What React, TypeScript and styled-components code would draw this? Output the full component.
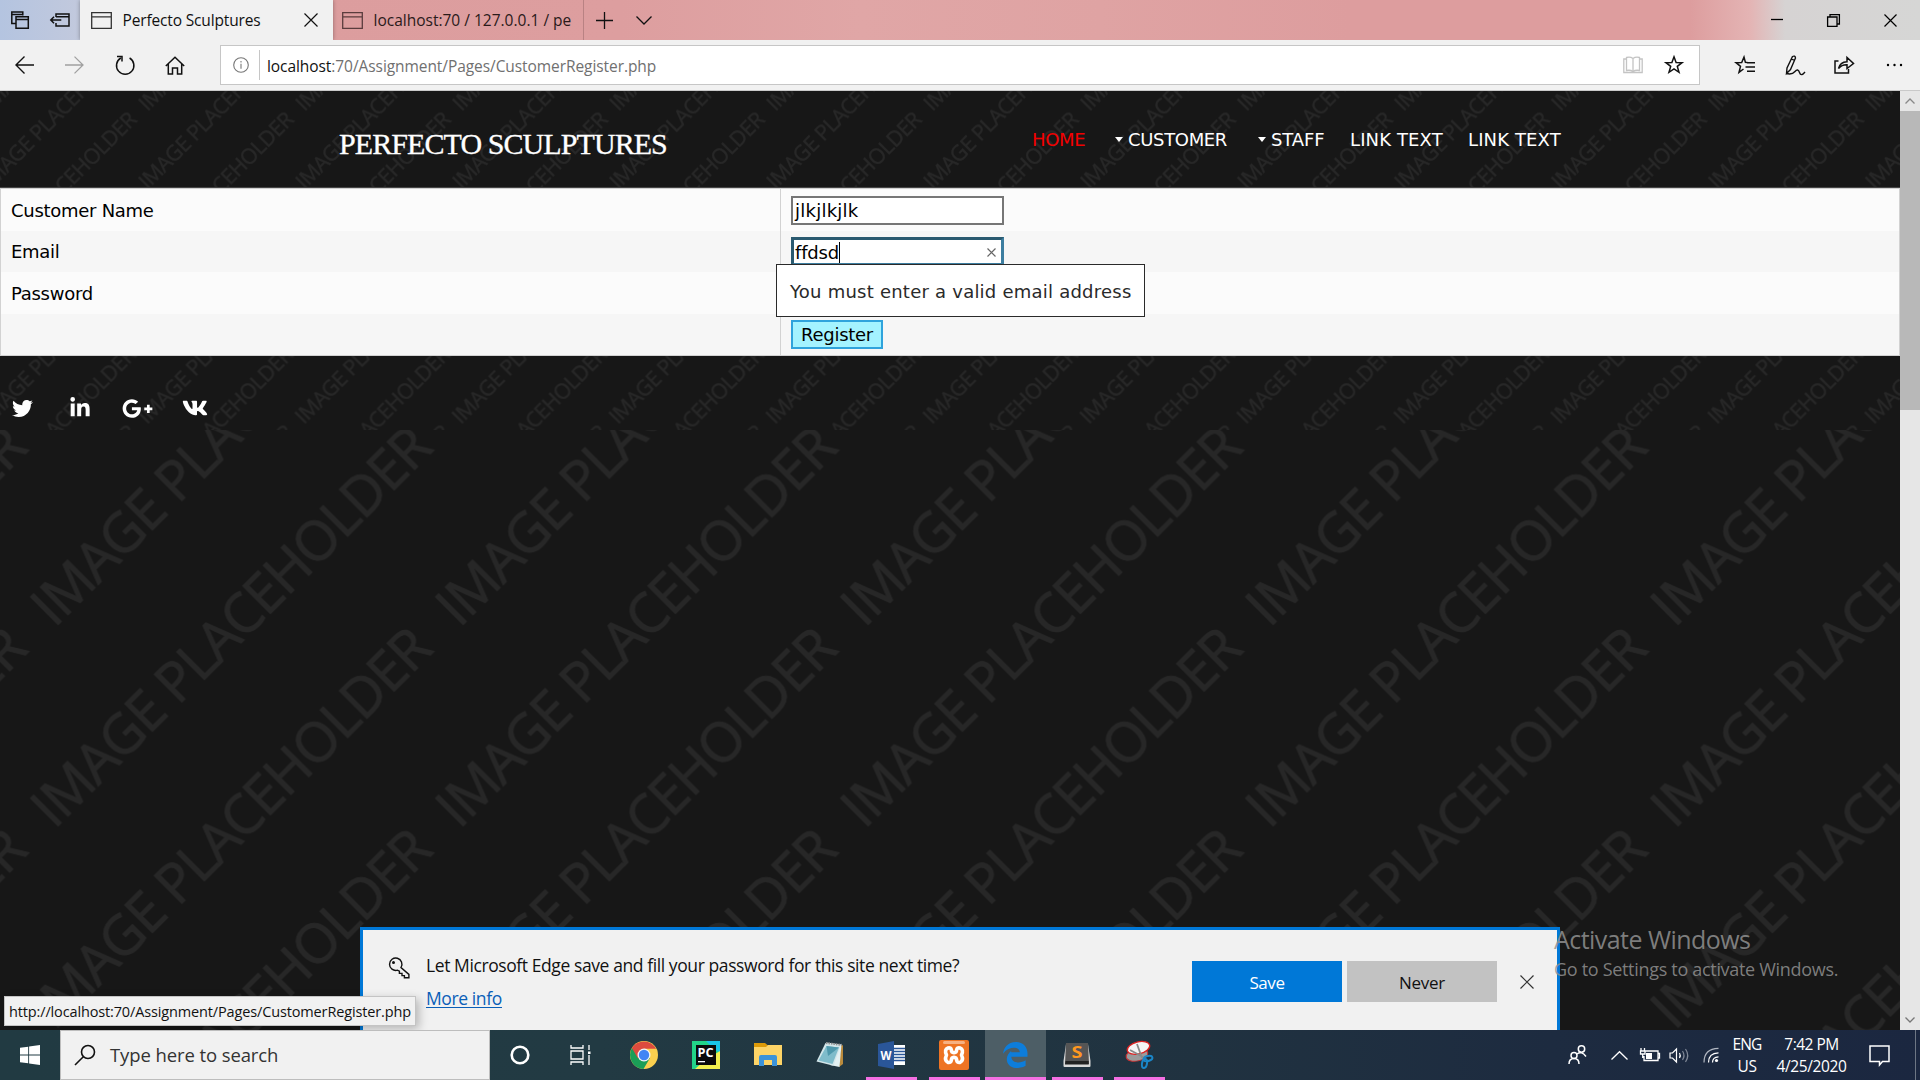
import React from "react";
import styled, { createGlobalStyle } from "styled-components";
import { FaTwitter, FaLinkedinIn, FaGooglePlusG, FaVk } from "react-icons/fa";

const UI = `"Open Sans", "Noto Sans", sans-serif`;
const PAGE = `"DejaVu Sans", sans-serif`;

const Global = createGlobalStyle`
  * { box-sizing: border-box; }
  body { margin: 0; background: #171717; overflow: hidden; }
  svg { display: block; flex: none; overflow: visible; }
`;

const Screen = styled.div`
  width: 1920px;
  height: 1080px;
  display: grid;
  grid-template-rows: 40px 51px 939px 50px;
  font-family: ${UI};
  color: #111;
  overflow: hidden;
`;

/* ---------- shared text ---------- */
const Label = styled.span<{ $size: number; $ls?: number; $color?: string }>`
  font-size: ${(p) => p.$size}px;
  letter-spacing: ${(p) => p.$ls ?? 0}px;
  color: ${(p) => p.$color ?? "inherit"};
  line-height: 1;
  white-space: nowrap;
`;

/* ---------- tab strip ---------- */
const TabStrip = styled.div`
  display: flex;
  background: linear-gradient(90deg, #b4c4e0 0, #c2c9dd 80px, #dc9d9e 300px, #dd9e9f 620px,
    #e0a6a6 860px, #dfa3a3 1100px, #dd9d9e 1350px, #dd9d9e 1690px, #e4b4b4 1750px, #d6d3d3 1785px, #d6d6d5 1920px);
`;
const TabTools = styled.div`
  width: 80px;
  display: flex;
  align-items: center;
  padding-left: 10px;
  gap: 20px;
`;
const Tab = styled.div<{ $active?: boolean }>`
  width: ${(p) => (p.$active ? 253 : 251)}px;
  display: flex;
  align-items: center;
  padding: 0 ${(p) => (p.$active ? 15 : 4)}px 0 ${(p) => (p.$active ? 11 : 9)}px;
  background: ${(p) => (p.$active ? "#f1f1f1" : "transparent")};
  border-right: ${(p) => (p.$active ? "none" : "1px solid #b98283")};
  box-shadow: ${(p) => (p.$active ? "0 0 4px rgba(0,0,0,.35)" : "none")};
`;
const TabTitle = styled(Label)`
  margin-left: 10.5px;
  flex: 1;
  height: 22px;
  line-height: 22px;
`;
const StripButtons = styled.div`
  display: flex;
  align-items: center;
  padding-left: 12px;
  gap: 23px;
`;
const WindowButtons = styled.div`
  margin-left: auto;
  display: flex;
  align-items: center;
  padding-right: 23px;
  gap: 44px;
`;

/* ---------- toolbar ---------- */
const Toolbar = styled.div`
  display: flex;
  align-items: center;
  background: #f1f1f1;
  border-bottom: 1px solid #c9c9c9;
`;
const NavButtons = styled.div`
  width: 220px;
  display: flex;
  align-items: center;
  padding-left: 15px;
  gap: 31px;
`;
const AddressBox = styled.div`
  width: 1480px;
  height: 40px;
  display: flex;
  align-items: center;
  background: #fff;
  border: 1px solid #c6c6c6;
  padding: 0 15px 0 12px;
`;
const AddressDivider = styled.div`
  width: 1px;
  height: 30px;
  background: #c6c6c6;
  margin: 0 7px 0 10px;
`;
const Url = styled(Label)`
  flex: 1;
  padding-top: 3px;
  b { font-weight: 400; color: #111; }
`;
const AddressIcons = styled.div`
  display: flex;
  align-items: center;
  gap: 21px;
`;
const ToolIcons = styled.div`
  display: flex;
  align-items: center;
  padding-left: 35px;
  gap: 29px;
`;

/* ---------- viewport ---------- */
const Viewport = styled.div`
  position: relative;
  display: flex;
  overflow: hidden;
`;
const Page = styled.div`
  width: 1900px;
  display: grid;
  grid-template-rows: 97px 168px 74px 600px;
  font-family: ${PAGE};
`;
const Band = styled.div`
  position: relative;
  background: #171717;
  overflow: hidden;
  display: flex;
`;
const PatternSvg = styled.svg`
  position: absolute;
  inset: 0;
  width: 100%;
  height: 100%;
`;
const Header = styled.div`
  position: relative;
  width: 100%;
  display: flex;
  justify-content: space-between;
  padding: 0 338px 0 339px;
  border-bottom: 1px solid #454545;
`;
const SiteName = styled.div`
  font-family: "Liberation Serif", serif;
  font-size: 30px;
  line-height: 34px;
  margin-top: 36px;
  letter-spacing: -0.92px;
  color: #fff;
  -webkit-text-stroke: 0.3px #fff;
  white-space: nowrap;
`;
const Menu = styled.div`
  display: flex;
  margin-top: 36px;
`;
const MenuItem = styled.div<{ $red?: boolean; $w: number; $ls?: number }>`
  width: ${(p) => p.$w}px;
  height: 24px;
  display: flex;
  align-items: center;
  gap: 5px;
  font-size: 18px;
  letter-spacing: ${(p) => p.$ls ?? -0.34}px;
  white-space: nowrap;
  color: ${(p) => (p.$red ? "#f20000" : "#fff")};
`;

const Table = styled.div`
  display: grid;
  grid-template-rows: 42px 41px 42px 41px;
  border: 1px solid #d2d2d2;
  position: relative;
`;
const Row = styled.div<{ $alt?: boolean }>`
  display: grid;
  grid-template-columns: 780px 1fr;
  background: ${(p) => (p.$alt ? "#f6f6f6" : "#fbfbfb")};
`;
const Cell = styled.div<{ $field?: boolean }>`
  display: flex;
  align-items: center;
  font-size: 18px;
  letter-spacing: -0.28px;
  color: #000;
  padding-left: 10px;
  border-right: ${(p) => (p.$field ? "none" : "1px solid #d2d2d2")};
`;
const Input = styled.div<{ $focus?: boolean }>`
  width: 213px;
  height: 29px;
  display: flex;
  align-items: center;
  background: #fff;
  border: 2px solid #767676;
  padding: 0 7px 0 2px;
  letter-spacing: 0.25px;
  ${(p) => p.$focus && "border-width: 3px; border-color: #2a5a70 #3d7ea0 #3d7ea0 #2a5a70; padding: 1px 5px 0 1px; letter-spacing: -0.2px;"}
`;
const Caret = styled.i`
  width: 1px;
  height: 21px;
  background: #000;
`;
const ClearIcon = styled.span`
  margin-left: auto;
  display: flex;
`;
const Register = styled.div`
  width: 92px;
  height: 29px;
  display: flex;
  align-items: center;
  justify-content: center;
  background: #a4f3ff;
  border: 2px solid #2fa3dc;
`;
const Tip = styled.div`
  position: absolute;
  left: 775px;
  top: 75px;
  width: 369px;
  height: 53px;
  display: flex;
  align-items: center;
  padding: 2px 0 0 13px;
  background: #fff;
  border: 1px solid #2a2a2a;
  font-size: 18px;
  letter-spacing: 0.23px;
  color: #2a2a2a;
  white-space: nowrap;
  z-index: 2;
`;
const Social = styled.div`
  position: relative;
  display: flex;
  align-items: center;
  color: #fff;
  padding: 30px 0 0 12px;
  height: 74px;
`;
const SocialItem = styled.div<{ $w: number }>`
  width: ${(p) => p.$w}px;
`;

const Scrollbar = styled.div`
  width: 20px;
  display: flex;
  flex-direction: column;
  background: #e6e6e6;
`;
const ScrollEnd = styled.div`
  height: 20px;
  display: flex;
  align-items: center;
  justify-content: center;
`;
const Thumb = styled.div`
  height: 299px;
  margin-bottom: 600px;
  background: #b8b8b8;
`;

/* ---------- floating bars ---------- */
const SaveBar = styled.div`
  position: absolute;
  left: 360px;
  top: 836px;
  width: 1200px;
  height: 103px;
  background: #f1f1f1;
  border: 3px solid #0078d7;
  border-bottom: none;
  display: flex;
  padding: 0 23px 0 25px;
`;
const KeyBox = styled.div`
  padding-top: 27px;
  width: 38px;
`;
const SaveText = styled.div`
  flex: 1;
  display: flex;
  flex-direction: column;
  align-items: flex-start;
  padding-top: 27px;
  gap: 15px;
`;
const LinkLabel = styled(Label)`
  color: #0a5fb8;
  border-bottom: 1px solid #0a5fb8;
`;
const SaveActions = styled.div`
  display: flex;
  align-items: center;
  padding-top: 3px;
`;
const ActionButton = styled.div<{ $primary?: boolean }>`
  width: 150px;
  height: 41px;
  padding-top: 2px;
  margin-right: ${(p) => (p.$primary ? 5 : 23)}px;
  display: flex;
  align-items: center;
  justify-content: center;
  background: ${(p) => (p.$primary ? "#0078d7" : "#c2c2c2")};
  color: ${(p) => (p.$primary ? "#fff" : "#111")};
`;
const Status = styled.div`
  position: absolute;
  left: 4px;
  top: 905px;
  width: 412px;
  height: 30px;
  display: flex;
  align-items: center;
  padding: 2px 0 0 4px;
  background: #f1f1f1;
  border: 1px solid #c4c4c4;
  box-shadow: 3px 3px 10px rgba(0, 0, 0, 0.25);
`;
const Watermark = styled.div`
  position: absolute;
  left: 1554px;
  top: 836px;
  display: flex;
  flex-direction: column;
  gap: 8px;
  color: rgba(145, 145, 145, 0.85);
`;

/* ---------- taskbar ---------- */
const Taskbar = styled.div`
  display: flex;
  background: linear-gradient(90deg, #213a42 0, #223a43 600px, #203240 1200px, #1d2b40 1550px, #1b2740 1920px);
  color: #fff;
`;
const Start = styled.div`
  width: 60px;
  display: flex;
  align-items: center;
  justify-content: center;
`;
const Search = styled.div`
  width: 430px;
  background: #f1f1f1;
  border: 1px solid #bdbdbd;
  display: flex;
  align-items: center;
  padding-left: 13px;
  gap: 14px;
  color: #333;
`;
const TaskButton = styled.div<{ $w?: number; $open?: boolean; $active?: boolean }>`
  width: ${(p) => p.$w ?? 62}px;
  display: flex;
  flex-direction: column;
  align-items: center;
  justify-content: space-between;
  background: ${(p) => (p.$active ? "#4d5e66" : "transparent")};
  &::after {
    content: "";
    width: ${(p) => (p.$active ? 61 : 51)}px;
    height: 3px;
    background: ${(p) => (p.$open ? "#f46fe3" : "transparent")};
  }
`;
const AppIcon = styled.div`
  height: 47px;
  display: flex;
  align-items: center;
  padding-top: 3px;
`;
const Tray = styled.div`
  margin-left: auto;
  display: flex;
  align-items: center;
`;
const TrayItem = styled.div<{ $w: number }>`
  width: ${(p) => p.$w}px;
  display: flex;
  justify-content: center;
`;
const TrayText = styled.div<{ $w: number }>`
  width: ${(p) => p.$w}px;
  display: flex;
  flex-direction: column;
  align-items: center;
  gap: 6px;
  padding-top: 1px;
`;
const ShowDesktop = styled.div`
  width: 5px;
  height: 50px;
  border-left: 1px solid #6d7684;
`;

const TW = 405;
const TH = 201.33;
function Backdrop({ id, x, y, s }: { id: string; x: number; y: number; s: number }) {
  const copies: [number, number][] = [];
  for (let k = 0; k < 4; k++) copies.push([35, k * TH + 1.5], [35 - TW, k * TH + 1.5]);
  return (
    <PatternSvg>
      <defs>
        <pattern id={id} width={TW} height={TH} patternUnits="userSpaceOnUse"
          patternTransform={`translate(${x - 40 * s} ${y}) scale(${s})`}>
          {copies.map(([cx, cy], i) => (
            <text key={i} transform={`translate(${cx} ${cy}) rotate(-45)`} fontFamily="Open Sans, sans-serif"
              fontSize="55" fill="#272727" stroke="#272727" strokeWidth="0.8" textLength="538">IMAGE PLACEHOLDER</text>
          ))}
        </pattern>
      </defs>
      <rect width="100%" height="100%" fill={`url(#${id})`} />
    </PatternSvg>
  );
}

type IP = { w: number; h: number; c?: string; sw?: number; children: React.ReactNode };
const Ic = ({ w, h, c = "#111", sw = 1.3, children }: IP) => (
  <svg width={w} height={h} viewBox={`0 0 ${w} ${h}`} fill="none" stroke={c} strokeWidth={sw}>{children}</svg>
);
const Cross = ({ n, c }: { n: number; c?: string }) => (
  <Ic w={n} h={n} c={c} sw={1.2}><path d={`M.5 .5L${n - 0.5} ${n - 0.5}M${n - 0.5} .5L.5 ${n - 0.5}`} /></Ic>
);
const WindowIcon = ({ c }: { c: string }) => (
  <Ic w={21} h={17} c={c}><path d="M.7 .7h19.6v15.6H.7zM.7 4.8h19.6" /></Ic>
);
const Triangle = () => (
  <svg width="8" height="5" viewBox="0 0 8 5"><path d="M0 0h8L4 5z" fill="#fff" /></svg>
);

export default function App() {
  return (
    <>
      <Global />
      <Screen>
        <TabStrip>
          <TabTools>
            <Ic w={20} h={18} sw={1.5}><path d="M5.5 12.5H1.8V1h11v3.5M1.8 3.5h11M6 5.8h12.3v11.4H6zM6 8.5h12.3" /></Ic>
            <Ic w={20} h={14} sw={1.5}><path d="M6 4V1h13v12H6v-3M6 3.7h13M.8 7h10.500M4 3.800L.8 7L4 10.200" /></Ic>
          </TabTools>
          <Tab $active>
            <WindowIcon c="#333" />
            <TabTitle $size={15.5} $ls={-0.15}>Perfecto Sculptures</TabTitle>
            <Cross n={14} />
          </Tab>
          <Tab>
            <WindowIcon c="#5a3c3d" />
            <TabTitle $size={15.5} $ls={0} $color="#2a1a1a">localhost:70 / 127.0.0.1 / pe</TabTitle>
          </Tab>
          <StripButtons>
            <Ic w={17} h={17}><path d="M8.5 0v17M0 8.500h17" /></Ic>
            <Ic w={16} h={9}><path d="M.5 .5L8 8L15.500 .5" /></Ic>
          </StripButtons>
          <WindowButtons>
            <Ic w={12} h={12} c="#000"><path d="M0 5.500h12" /></Ic>
            <Ic w={13} h={13} c="#000"><path d="M.6 3h9.400v9.400H.6zM3 3V.6h9.400V10H10" /></Ic>
            <Cross n={13} c="#000" />
          </WindowButtons>
        </TabStrip>

        <Toolbar>
          <NavButtons>
            <Ic w={19} h={18} sw={1.4}><path d="M19 9H1M9.500 .6L1 9L9.500 17.400" /></Ic>
            <Ic w={19} h={18} c="#a0a0a0"><path d="M0 9h18M9.500 .6L18 9L9.500 17.400" /></Ic>
            <Ic w={20} h={20} sw={1.5}><path d="M14.600 3A8.700 8.700 0 1 1 5.800 3M2 1.500L7 1.500V6.500" /></Ic>
            <Ic w={18} h={19} sw={1.5}><path d="M-.2 10L9 1.200L18.200 10M2.300 8V18h4.200v-6h5v6h4.200V8" /></Ic>
          </NavButtons>
          <AddressBox>
            <Ic w={16} h={16} c="#777" sw={1.1}><circle cx="8" cy="8" r="7.300" /><path d="M8 6.800v5M8 4v1.500" /></Ic>
            <AddressDivider />
            <Url $size={15.5} $ls={-0.07} $color="#707070"><b>localhost</b>:70/Assignment/Pages/CustomerRegister.php</Url>
            <AddressIcons>
              <Ic w={20} h={18} c="#c4c4c4"><path d="M10 2.500C8 1 5.500 1 3.500 1.500v13c2-.4 4.500-.4 6.500 1c2-1.400 4.500-1.400 6.500-1v-13C14.500 1 12 1 10 2.500zV15M3 3H.8v13.500h18.400V3H17" /></Ic>
              <Ic w={20} h={20} sw={1.5}><path d="M10 1.800l2.100 5.700 6 .2-4.800 3.700 1.700 5.900L10 13.900l-5 3.400 1.700-5.900L1.900 7.700l6-.2z" /></Ic>
            </AddressIcons>
          </AddressBox>
          <ToolIcons>
            <Ic w={21} h={20} sw={1.5}><path d="M12.400 7.600L10.400 7.400L9 2L6.700 7.500L1 7.700l4.500 3.700L4 17.400L8.500 14M12 7.800h8M10.500 12h9.500M12 16.200h8" /></Ic>
            <Ic w={21} h={20} sw={1.4}><path d="M1.500 18.500L2 13L7.500 1.500Q10 .2 10.500 3L5.500 14.500zM9.500 5.500L6.500 3.800M1.500 18.500Q7 20 10 16.500T14.500 17.500T20 17" /></Ic>
            <Ic w={20} h={18} sw={1.5}><path d="M3.500 5H0v12h13.500v-4M3.500 12.500Q5 6 12 5.700V1.500l6.500 6L12 12.500V8.800Q7 8.500 3.500 12.500z" /></Ic>
            <svg width="19" height="4"><circle cx="4" cy="2" r="1.200" /><circle cx="10.500" cy="2" r="1.200" /><circle cx="17" cy="2" r="1.200" /></svg>
          </ToolIcons>
        </Toolbar>

        <Viewport>
          <Page>
            <Band>
              <Backdrop id="bg-head" x={149.6} y={20.5} s={0.3876} />
              <Header>
                <SiteName>PERFECTO SCULPTURES</SiteName>
                <Menu>
                  <MenuItem $w={83} $red>HOME</MenuItem>
                  <MenuItem $w={143}><Triangle />CUSTOMER</MenuItem>
                  <MenuItem $w={92} $ls={-0.1}><Triangle />STAFF</MenuItem>
                  <MenuItem $w={118} $ls={0.12}>LINK TEXT</MenuItem>
                  <MenuItem $w={94} $ls={0.12}>LINK TEXT</MenuItem>
                </Menu>
              </Header>
            </Band>
            <Table>
              <Row><Cell>Customer Name</Cell><Cell $field><Input>jlkjlkjlk</Input></Cell></Row>
              <Row $alt>
                <Cell>Email</Cell>
                <Cell $field><Input $focus>ffdsd<Caret /><ClearIcon><Cross n={9} c="#666" /></ClearIcon></Input></Cell>
              </Row>
              <Row><Cell>Password</Cell><Cell $field /></Row>
              <Row $alt><Cell /><Cell $field><Register>Register</Register></Cell></Row>
              <Tip>You must enter a valid email address</Tip>
            </Table>
            <Band>
              <Backdrop id="bg-foot" x={149} y={68.5} s={0.3876} />
              <Social>
                <SocialItem $w={57}><FaTwitter size={21} /></SocialItem>
                <SocialItem $w={53}><FaLinkedinIn size={22} /></SocialItem>
                <SocialItem $w={60}><FaGooglePlusG size={31} /></SocialItem>
                <SocialItem $w={30}><FaVk size={26} /></SocialItem>
              </Social>
            </Band>
            <Band><Backdrop id="bg-main" x={59.4} y={197} s={1} /></Band>
          </Page>
          <Scrollbar>
            <ScrollEnd><Ic w={10} h={6} c="#888"><path d="M.5 5.500L5 1L9.500 5.500" /></Ic></ScrollEnd>
            <Thumb />
            <ScrollEnd><Ic w={10} h={6} c="#777"><path d="M.5 .5L5 5L9.500 .5" /></Ic></ScrollEnd>
          </Scrollbar>

          <SaveBar>
            <KeyBox>
              <Ic w={22} h={22} sw={1.4}><path d="M13 10.500a6.200 6.200 0 1 0-3.600 2.700l2 1v2.200h2.600v2.200h2.400v2.200h4.500v-3.400z" /><circle cx="5.500" cy="5.500" r=".8" /></Ic>
            </KeyBox>
            <SaveText>
              <Label $size={17.500} $ls={-0.41}>Let Microsoft Edge save and fill your password for this site next time?</Label>
              <LinkLabel $size={17.500} $ls={-0.4}>More info</LinkLabel>
            </SaveText>
            <SaveActions>
              <ActionButton $primary><Label $size={17} $ls={-0.4}>Save</Label></ActionButton>
              <ActionButton><Label $size={17} $ls={-0.3}>Never</Label></ActionButton>
              <Cross n={14} c="#333" />
            </SaveActions>
          </SaveBar>
          <Status><Label $size={14.500} $ls={-0.14}>http://localhost:70/Assignment/Pages/CustomerRegister.php</Label></Status>
          <Watermark>
            <Label $size={25} $ls={-0.55}>Activate Windows</Label>
            <Label $size={18} $ls={-0.31}>Go to Settings to activate Windows.</Label>
          </Watermark>
        </Viewport>

        <Taskbar>
          <Start>
            <svg width="20" height="20" viewBox="0 0 20 20" fill="#fff"><path d="M0 2.800L8.200 1.700V9.600H0zM9.100 1.500L20 0v9.600H9.100zM0 10.400h8.200v7.900L0 17.200zM9.100 10.400H20V20L9.100 18.500z" /></svg>
          </Start>
          <Search>
            <Ic w={22} h={22} sw={1.6}><circle cx="14" cy="8" r="6.500" /><path d="M9.300 12.700L1 21" /></Ic>
            <Label $size={18.500} $ls={-0.1}>Type here to search</Label>
          </Search>
          <TaskButton $w={60}><AppIcon><Ic w={20} h={20} c="#fff" sw={2.600}><circle cx="10" cy="10" r="8.300" /></Ic></AppIcon></TaskButton>
          <TaskButton $w={62}><AppIcon>
            <Ic w={22} h={20} c="#fff"><path d="M1 0v3h12V0M1 20v-3h12v3M1 6h12v8H1zM19 0v5M19 10v10" /><rect x="18" y="6.500" width="2.500" height="2.500" fill="#fff" stroke="none" /></Ic>
          </AppIcon></TaskButton>
          <TaskButton $w={64}><AppIcon>
            <svg width="28" height="28" viewBox="0 0 28 28">
              <circle cx="14" cy="14" r="14" fill="#fbd04f" />
              <path d="M14 14L1.900 7A14 14 0 0 0 13.500 28L20 17z" fill="#1b9e57" />
              <path d="M1.900 7A14 14 0 0 1 26.100 7.800H14L8 17.500z" fill="#dd4b3e" />
              <circle cx="14" cy="14" r="6.500" fill="#f4f4f4" /><circle cx="14" cy="14" r="5.200" fill="#4285f4" />
            </svg>
          </AppIcon></TaskButton>
          <TaskButton $w={60}><AppIcon>
            <svg width="28" height="28" viewBox="0 0 28 28">
              <rect width="28" height="28" fill="#22d489" /><path d="M14 0h14v12L22 8z" fill="#18c5e8" /><path d="M28 10v18H3l10-9z" fill="#f3f04e" />
              <rect x="4" y="4" width="20" height="20" fill="#0b0b0b" />
              <text x="5.500" y="15.500" fontFamily="Open Sans" fontWeight="700" fontSize="12" fill="#fff" textLength="16" lengthAdjust="spacingAndGlyphs">PC</text>
              <rect x="6" y="20" width="7" height="1.300" fill="#fff" />
            </svg>
          </AppIcon></TaskButton>
          <TaskButton $w={63}><AppIcon>
            <svg width="28" height="24" viewBox="0 0 28 24">
              <path d="M0 0h11l3 2.500V5H0z" fill="#dd9a08" /><path d="M0 4h12l2-2h14v20H0z" fill="#fdd467" />
              <path d="M5 23V14q0-2 2-2h14q2 0 2 2v9h-5v-6H10v6z" fill="#3c93d9" />
            </svg>
          </AppIcon></TaskButton>
          <TaskButton $w={61}><AppIcon>
            <svg width="28" height="26" viewBox="0 0 28 26">
              <path d="M25 2.500l2 1V22l-4 3z" fill="#b98a3c" /><path d="M10 .5l15.500 2L23.500 25 14 23z" fill="#e3f1f3" />
              <path d="M9.500 1L25 2.800l-7.500 21L.5 19.500z" fill="#d3e6ea" /><path d="M10.500 4L23 5.500 16.500 22 2.500 18.500z" fill="#7fbccb" />
              <path d="M10.500 4L23 5.500 12 14z" fill="#4f99ad" /><path d="M10 1l16 2" stroke="#8f8f8f" strokeWidth="2" strokeDasharray="1.500 1" />
            </svg>
          </AppIcon></TaskButton>
          <TaskButton $w={63} $open><AppIcon>
            <svg width="28" height="28" viewBox="0 0 28 28">
              <path d="M14 4h13v20H14z" fill="#fff" /><path d="M16 7.500h11M16 10.500h11M16 13.500h11M16 16.500h11M16 19.500h11" stroke="#2a5699" strokeWidth="1.300" />
              <path d="M0 3l16-3v28L0 25z" fill="#2a5699" />
              <text x="2.500" y="18.500" fontFamily="Open Sans" fontWeight="700" fontSize="12" fill="#fff" textLength="11" lengthAdjust="spacingAndGlyphs">W</text>
            </svg>
          </AppIcon></TaskButton>
          <TaskButton $w={62} $open><AppIcon>
            <svg width="30" height="30" viewBox="0 0 30 30">
              <rect width="30" height="30" rx="2" fill="#ee7424" /><rect x="4" y="1" width="22" height="3" rx="1.500" fill="#f7b182" />
              <path d="M15 12.800Q17.600 12.500 17.600 10Q18 7.300 21 8Q25 9.500 22.500 15Q25 20.500 21 22.500Q18 23 17.600 20Q17.600 17.400 15 17.200Q12.400 17.400 12.400 20Q12 23 9 22.500Q5 20.500 7.500 15Q5 9.500 9 8Q12 7.300 12.400 10Q12.400 12.500 15 12.800z" fill="none" stroke="#fff" strokeWidth="3.600" strokeLinejoin="round" />
            </svg>
          </AppIcon></TaskButton>
          <TaskButton $w={61} $open $active><AppIcon>
            <svg width="25" height="26" viewBox="0 0 25 26"><path d="M0 11.800C.6 6 4.600 0 13 0c7.500 0 11.500 5.500 11.500 11.500v3.200H8.300c.3 6.800 9.200 6.900 14.300 3.600v5.400c-3.200 1.900-7 2.300-9.800 2.300C3 25.500 .5 14.500 8.700 8.600 8 9.400 7.800 10 8.500 10.300h8.300c0-5-6.800-5.400-10.600-3.500C3 8.200 1.300 10 0 11.800z" fill="#0d7ddb" /></svg>
          </AppIcon></TaskButton>
          <TaskButton $w={62} $open><AppIcon>
            <svg width="28" height="26" viewBox="0 0 28 26">
              <path d="M3 2h22l2.500 17v5q0 1-1 1H1.500q-1 0-1-1v-5z" fill="#d8d8d8" /><path d="M3 1h22l1 21H2z" fill="#555" /><path d="M2.500 19h23.200v3.500H2z" fill="#222" />
              <text x="8.500" y="15.800" fontFamily="Open Sans" fontWeight="700" fontSize="16" fill="#ff981f" textLength="11" lengthAdjust="spacingAndGlyphs">S</text>
            </svg>
          </AppIcon></TaskButton>
          <TaskButton $w={62} $open><AppIcon>
            <svg width="28" height="28" viewBox="0 0 28 28">
              <ellipse cx="12" cy="14" rx="11" ry="6" transform="rotate(-12 12 14)" fill="#9b9b9b" stroke="#c33" />
              <ellipse cx="13.500" cy="7" rx="11.500" ry="6" transform="rotate(-14 13 7)" fill="#f5f5f5" stroke="#d22" strokeWidth="1.300" />
              <path d="M12 3l5 14M5 9l13 7" stroke="#8a8a8a" strokeWidth="1.800" />
              <ellipse cx="23" cy="17.500" rx="4.500" ry="2.500" transform="rotate(-15 23 17.500)" fill="none" stroke="#1a86c8" strokeWidth="2" />
              <ellipse cx="19.500" cy="22.500" rx="2.500" ry="4.500" transform="rotate(10 19.500 22.500)" fill="none" stroke="#1a86c8" strokeWidth="2" />
            </svg>
          </AppIcon></TaskButton>
          <Tray>
            <TrayItem $w={54}><Ic w={19} h={20} c="#fff" sw={1.500}><circle cx="13.500" cy="4" r="3.200" /><circle cx="6" cy="10.500" r="3" /><path d="M1 19q0-5.500 5-5.500t5 5.500M9 9q4.500-3.500 9 2.500" /></Ic></TrayItem>
            <TrayItem $w={31}><Ic w={17} h={9} c="#fff"><path d="M.5 8.500L8.500 .7L16.500 8.500" /></Ic></TrayItem>
            <TrayItem $w={29}><Ic w={20} h={14} c="#fff"><path d="M5.500 3h12.500v9.500H4V8M18 5.500h1.500v4.500H18M1 0v3M4.500 0v3M.5 3h4.500v3H.5zM2.700 6v4" /><rect x="6" y="5" width="6" height="6" fill="#fff" stroke="none" /></Ic></TrayItem>
            <TrayItem $w={30}><Ic w={21} h={17} c="#fff" sw={1.200}><path d="M1 6h2.500L7.500 2v13L3.500 11H1zM10.500 6q1.500 2.500 0 5" /><path d="M13.500 4q3 4.500 0 9M16.500 2q4.500 6.500 0 13" stroke="#7f8796" /></Ic></TrayItem>
            <TrayItem $w={33}><Ic w={16} h={16} c="#fff" sw={1.200}><circle cx="13.500" cy="13.500" r="1.600" fill="#fff" stroke="none" /><path d="M9.500 15.500q0-5.500 6-5.700M5.500 15.500q0-9.500 10-9.700" /><path d="M1 15.500Q1 1.500 15.500 1.300" stroke="#b0b6c0" /></Ic></TrayItem>
            <TrayText $w={40}><Label $size={15.500} $ls={-0.800}>ENG</Label><Label $size={15.500} $ls={-0.500}>US</Label></TrayText>
            <TrayText $w={89}><Label $size={15.500} $ls={-0.500}>7:42 PM</Label><Label $size={15.500} $ls={-0.400}>4/25/2020</Label></TrayText>
            <TrayItem $w={47}><Ic w={21} h={21} c="#fff" sw={1.500}><path d="M1 1h19v15.500h-6.500L10.500 20v-3.500H1z" /></Ic></TrayItem>
            <TrayItem $w={12} />
            <ShowDesktop />
          </Tray>
        </Taskbar>
      </Screen>
    </>
  );
}
